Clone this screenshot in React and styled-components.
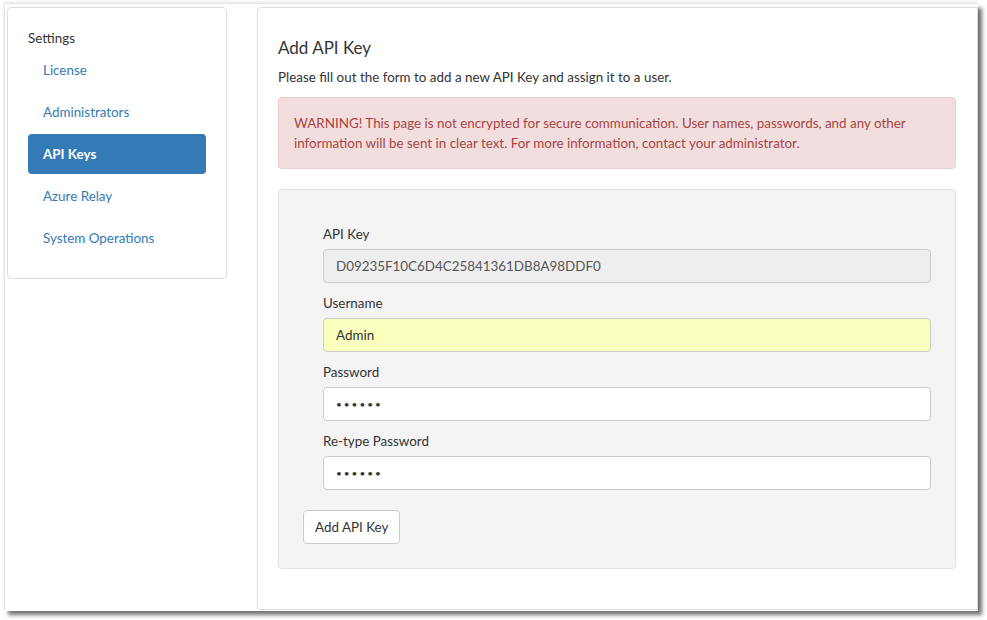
import React from "react";
import styled, { createGlobalStyle } from "styled-components";

const GlobalStyle = createGlobalStyle`
  html, body {
    margin: 0;
    padding: 0;
    background: #ffffff;
  }
  body {
    font-family: "Lato", "Liberation Sans", sans-serif;
    font-size: 13.4px;
    color: #333333;
  }
  * {
    box-sizing: border-box;
  }
`

const Page = styled.div`
  padding: 4px 0 0 4px;
  height: 620px;
`

const Frame = styled.div`
  width: 974px;
  height: 607px;
  padding: 3px 0 0 2px;
  background: #ffffff;
  border-left: 1px solid #e4e4e4;
  box-shadow: 0 -2px 3px rgba(0, 0, 0, 0.1), 4px 4px 4px rgba(0, 0, 0, 0.55);
  display: flex;
  align-items: flex-start;
  gap: 30px;
`

const Sidebar = styled.div`
  width: 220px;
  border: 1px solid #dddddd;
  border-radius: 4px;
  padding: 20px;
`

const SideTitle = styled.div`
  line-height: 20px;
  color: #333333;
`

const NavList = styled.ul`
  margin: 0;
  padding: 0;
  list-style: none;
`

const NavItem = styled.li`
  margin-top: 2px;
  height: 40px;
  line-height: 40px;
  padding: 0 15px;
  border-radius: 4px;
  color: ${props => (props.active ? "#ffffff" : "#337ab7")};
  background: ${props => (props.active ? "#337ab7" : "transparent")};
  font-weight: ${props => (props.active ? "bold" : "normal")};
`

const Main = styled.div`
  flex: 1;
  height: 603px;
  border: 1px solid #dddddd;
  border-radius: 4px 0 0 4px;
  padding: 20px 21px 0 20px;
`

const Title = styled.h3`
  margin: 0;
  font-size: 17px;
  font-weight: normal;
  line-height: 39px;
`

const Lead = styled.p`
  margin: 0 0 10px 0;
  line-height: 20px;
`

const Alert = styled.div`
  background: #f2dede;
  border: 1px solid #ebccd1;
  border-radius: 4px;
  color: #a94442;
  padding: 15px;
  line-height: 20px;
  margin-bottom: 20px;
`

const Well = styled.div`
  background: #f4f4f4;
  border: 1px solid #e3e3e3;
  border-radius: 4px;
  padding: 34px 24px 24px 24px;
  height: 380px;
`

const Fields = styled.div`
  margin-left: 20px;
  margin-bottom: 20px;
`

const Group = styled.div`
  margin-bottom: 10px;
  &:last-child {
    margin-bottom: 0;
  }
`

const Label = styled.label`
  display: block;
  line-height: 20px;
  margin-bottom: 5px;
  color: #333333;
`

const Input = styled.input`
  display: block;
  width: 100%;
  height: 34px;
  padding: 6px 12px;
  font-family: inherit;
  font-size: ${props => (props.type === "password" ? "10px" : "13.4px")};
  letter-spacing: ${props => (props.type === "password" ? "2px" : "normal")};
  color: ${props => (props.readOnly ? "#555555" : "#333333")};
  background: ${props => props.bg || "#ffffff"};
  border: 1px solid #cccccc;
  border-radius: 4px;
  outline: none;
`

const Button = styled.button`
  height: 34px;
  padding: 6px 11px;
  font-family: inherit;
  font-size: 13.4px;
  color: #333333;
  background: #ffffff;
  border: 1px solid #cccccc;
  border-radius: 4px;
`

const navItems = ["License", "Administrators", "API Keys", "Azure Relay", "System Operations"];

export default function App() {
  return (
    <>
      <GlobalStyle />
      <Page>
        <Frame>
          <Sidebar>
            <SideTitle>Settings</SideTitle>
            <NavList>
              {navItems.map(item => (
                <NavItem key={item} active={item === "API Keys"}>{item}</NavItem>
              ))}
            </NavList>
          </Sidebar>
          <Main>
            <Title>Add API Key</Title>
            <Lead>Please fill out the form to add a new API Key and assign it to a user.</Lead>
            <Alert>
              WARNING! This page is not encrypted for secure communication. User names, passwords, and any other
              information will be sent in clear text. For more information, contact your administrator.
            </Alert>
            <Well>
              <Fields>
                <Group>
                  <Label>API Key</Label>
                  <Input readOnly bg="#eeeeee" value="D09235F10C6D4C25841361DB8A98DDF0" />
                </Group>
                <Group>
                  <Label>Username</Label>
                  <Input bg="#faffbd" defaultValue="Admin" />
                </Group>
                <Group>
                  <Label>Password</Label>
                  <Input type="password" defaultValue="secret" />
                </Group>
                <Group>
                  <Label>Re-type Password</Label>
                  <Input type="password" defaultValue="secret" />
                </Group>
              </Fields>
              <Button>Add API Key</Button>
            </Well>
          </Main>
        </Frame>
      </Page>
    </>
  );
}
